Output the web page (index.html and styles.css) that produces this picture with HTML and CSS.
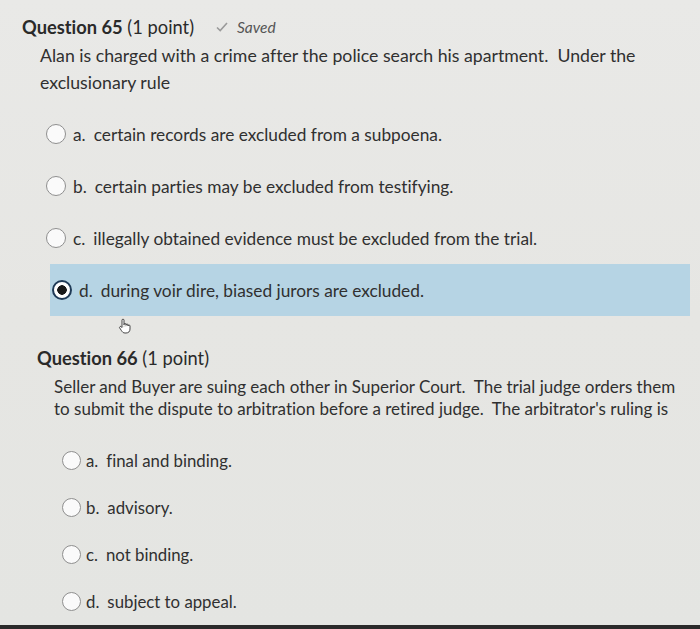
FILE: index.html
```html
<!DOCTYPE html>
<html>
<head>
<meta charset="utf-8">
<link rel="stylesheet" href="styles.css">
</head>
<body>
<div class="page">
  <section class="q q65">
    <div class="q-head">
      <h2 class="q-title"><b>Question 65</b> (1 point)</h2>
      <span class="saved"><svg class="check" width="14" height="12" viewBox="0 0 14 12"><path d="M2 6.5 L5.2 9.5 L12 2" fill="none" stroke="#9a9a9a" stroke-width="1.6"/></svg>Saved</span>
    </div>
    <p class="q-text">Alan is charged with a crime after the police search his apartment.&nbsp; Under the exclusionary rule</p>
    <ul class="opts">
      <li class="opt"><span class="radio"></span><span class="lbl">a.</span>certain records are excluded from a subpoena.</li>
      <li class="opt"><span class="radio"></span><span class="lbl">b.</span>certain parties may be excluded from testifying.</li>
      <li class="opt"><span class="radio"></span><span class="lbl">c.</span>illegally obtained evidence must be excluded from the trial.</li>
      <li class="opt selected"><span class="radio on"></span><span class="lbl">d.</span>during voir dire, biased jurors are excluded.</li>
    </ul>
    <div class="cursor-row">
      <svg class="hand" width="16" height="16" viewBox="0 0 16 16"><path d="M5 9 V2.2 a1 1 0 0 1 2 0 V7 M7 6.5 a1 1 0 0 1 2 0 V7.5 M9 7 a1 1 0 0 1 2 0 V8 M11 8 a1 1 0 0 1 2 0 V11 c0 2.5 -1.5 4 -4 4 H8 c-1.8 0 -2.6 -1 -3.6 -2.5 L2.6 9.8 a1 1 0 0 1 1.7 -1 L5 9.8" fill="#fff" stroke="#333" stroke-width="0.9" stroke-linejoin="round"/></svg>
    </div>
  </section>
  <section class="q q66">
    <h2 class="q-title"><b>Question 66</b> (1 point)</h2>
    <p class="q-text">Seller and Buyer are suing each other in Superior Court.&nbsp; The trial judge orders them to submit the dispute to arbitration before a retired judge.&nbsp; The arbitrator's ruling is</p>
    <ul class="opts">
      <li class="opt"><span class="radio"></span><span class="lbl">a.</span>final and binding.</li>
      <li class="opt"><span class="radio"></span><span class="lbl">b.</span>advisory.</li>
      <li class="opt"><span class="radio"></span><span class="lbl">c.</span>not binding.</li>
      <li class="opt"><span class="radio"></span><span class="lbl">d.</span>subject to appeal.</li>
    </ul>
  </section>
</div>
<div class="bottom-bar"></div>
</body>
</html>
```
FILE: styles.css
```css
* { box-sizing: border-box; }
html, body { margin: 0; padding: 0; }
body {
  width: 700px;
  height: 629px;
  overflow: hidden;
  background: linear-gradient(180deg, #e9e9e7 0%, #e6e6e3 50%, #e4e5e2 100%);
  font-family: Lato, "Open Sans", sans-serif;
  font-variant-ligatures: none;
  color: #333;
  position: relative;
}
.page { padding-top: 16px; }
.q-head { display: flex; align-items: center; padding-left: 22px; height: 22px; }
.q-title {
  margin: 0;
  font-size: 18.3px;
  line-height: 22px;
  font-weight: 400;
  color: #2a2a2a;
}
.q-title b { font-weight: 700; }
.saved {
  margin-left: 21px;
  font-style: italic;
  font-size: 15.5px;
  color: #555;
  display: inline-flex;
  align-items: center;
}
.check { margin-right: 8px; }
.q-text {
  margin: 0;
  font-size: 17.7px;
  line-height: 27px;
  color: #303030;
}
.q65 .q-text { padding: 4px 40px 0 40px; }
.opts { list-style: none; margin: 0; padding: 0; }
.opt {
  display: flex;
  align-items: center;
  font-size: 17.3px;
  color: #303030;
}
.radio {
  width: 20px;
  height: 20px;
  border-radius: 50%;
  border: 1.5px solid #8f8f8f;
  background: #fafafa;
  flex: none;
  margin-right: 7px;
}
.radio.on {
  border: 2.5px solid #1f3a57;
  background: radial-gradient(circle, #1a1a1a 0 4.5px, #fff 5px);
}
.lbl { margin-right: 8px; }
.q65 .opts { margin-top: 12px; }
.q65 .opt { height: 52px; padding-left: 46px; margin-right: 10px; }
.q65 .opt.selected {
  background: #b6d4e4;
  margin-left: 50px;
  padding-left: 2px;
}
.cursor-row { height: 31px; padding-left: 117px; padding-top: 2px; }
.q66 .q-title { padding-left: 37px; }
.q66 .q-text { padding: 7px 18px 0 54px; font-size: 17px; line-height: 22px; }
.q66 .opts { margin-top: 17px; }
.q66 .opt { height: 47px; padding-left: 62px; font-size: 16.8px; }
.q66 .opt .radio { width: 19px; height: 19px; margin-right: 5px; }
.bottom-bar {
  position: absolute;
  left: 0; right: 0; bottom: 0;
  height: 4px;
  background: #2a2a2a;
}
```
